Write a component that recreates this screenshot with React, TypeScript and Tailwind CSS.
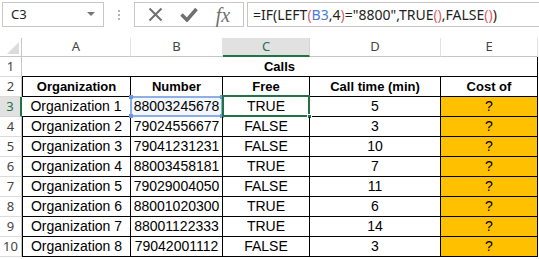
import React from "react";

const rows = [
  ["Organization 1", "88003245678", "TRUE", "5"],
  ["Organization 2", "79024556677", "FALSE", "3"],
  ["Organization 3", "79041231231", "FALSE", "10"],
  ["Organization 4", "88003458181", "TRUE", "7"],
  ["Organization 5", "79029004050", "FALSE", "11"],
  ["Organization 6", "88001020300", "TRUE", "6"],
  ["Organization 7", "88001122333", "TRUE", "14"],
  ["Organization 8", "79042001112", "FALSE", "3"],
];

const cell = "h-[20px] flex items-center justify-center border-r border-b border-black";

function RowHead({ n, active }: { n: number; active?: boolean }) {
  return (
    <div
      className={
        active
          ? "h-[20px] flex items-center justify-center bg-[#e1e1e1] text-[#217346] border-b border-[#d4d4d4] border-r-2 border-r-[#217346]"
          : "h-[20px] flex items-center justify-center text-[#444] border-b border-[#dadada] border-r border-r-[#c6c6c6]"
      }
      style={{ fontFamily: "'Noto Sans', sans-serif" }}
    >
      <span className="text-[13px]">{n}</span>
    </div>
  );
}

function ColHead({ label, active }: { label: string; active?: boolean }) {
  return (
    <div
      className={
        active
          ? "h-[19px] flex items-center justify-center bg-[#e1e1e1] text-[#217346] border-r border-[#d4d4d4] border-b-2 border-b-[#217346]"
          : "h-[19px] flex items-center justify-center text-[#444] border-r border-[#e2e2e2] border-b border-b-[#c6c6c6]"
      }
      style={{ fontFamily: "'Noto Sans', sans-serif" }}
    >
      <span className="text-[13px]">{label}</span>
    </div>
  );
}

export default function App() {
  return (
    <div
      className="w-[539px] h-[259px] overflow-hidden bg-white text-black"
      style={{ fontFamily: "'Liberation Sans', Arial, sans-serif" }}
    >
      {/* Formula bar */}
      <div className="flex items-start pt-[2px] h-[38px]">
        <div
          className="ml-[2px] w-[102px] h-[25px] border border-[#c6c6c6] flex items-center justify-between pl-[8px] pr-[8px] text-[#222]"
          style={{ fontFamily: "'Noto Sans', sans-serif" }}
        >
          <span className="text-[13px]">C3</span>
          <svg width="8" height="5" viewBox="0 0 8 5">
            <path d="M0 0 L8 0 L4 4 Z" fill="#777" />
          </svg>
        </div>
        <div className="w-[30px] h-[25px] flex flex-col items-center justify-center gap-[2px]">
          <div className="w-[2px] h-[2px] bg-[#b5b5b5]" />
          <div className="w-[2px] h-[2px] bg-[#b5b5b5]" />
          <div className="w-[2px] h-[2px] bg-[#b5b5b5]" />
        </div>
        <div className="w-[110px] h-[25px] border border-[#c6c6c6] flex items-center justify-around px-[4px]">
          <svg width="15" height="15" viewBox="0 0 15 15">
            <path d="M1.5 1.5 L13.5 13.5 M13.5 1.5 L1.5 13.5" stroke="#6f6f6f" strokeWidth="2" />
          </svg>
          <svg width="18" height="15" viewBox="0 0 18 15">
            <path d="M1.5 7.5 L7 13 L16.5 2" stroke="#6f6f6f" strokeWidth="3.5" fill="none" />
          </svg>
          <span
            className="text-[20px] italic text-[#6f6f6f] leading-none"
            style={{ fontFamily: "'Liberation Serif', serif" }}
          >
            fx
          </span>
        </div>
        <div
          className="ml-[3px] flex-1 h-[25px] border-l border-t border-b border-[#c6c6c6] flex items-center pl-[5px] text-[14px] text-[#222] whitespace-nowrap"
          style={{ fontFamily: "'Noto Sans', sans-serif" }}
        >
          <span>=IF(LEFT</span>
          <span className="text-[#e05a6a]">(</span>
          <span className="text-[#4a7ad6]">B3</span>
          <span>,4</span>
          <span className="text-[#e05a6a]">)</span>
          <span>="8800",TRUE</span>
          <span className="text-[#e05a6a]">()</span>
          <span>,FALSE</span>
          <span className="text-[#e05a6a]">()</span>
          <span>)</span>
        </div>
      </div>

      {/* Sheet */}
      <div className="grid grid-cols-[22px_109px_92px_87px_131px_97px] text-[14px]">
        {/* Column headers */}
        <div className="h-[19px] border-r border-[#c6c6c6] border-b border-b-[#c6c6c6] flex items-end justify-end pr-[2px] pb-[2px]">
          <svg width="12" height="12" viewBox="0 0 12 12">
            <path d="M12 0 L12 12 L0 12 Z" fill="#dcdcdc" />
          </svg>
        </div>
        <ColHead label="A" />
        <ColHead label="B" />
        <ColHead label="C" active />
        <ColHead label="D" />
        <ColHead label="E" />

        {/* Row 1 */}
        <RowHead n={1} />
        <div className="col-span-5 h-[20px] flex items-center justify-center font-bold text-[13px] border-r border-b border-black">
          Calls
        </div>

        {/* Row 2 */}
        <RowHead n={2} />
        <div className={`${cell} border-l font-bold text-[13px]`}>Organization</div>
        <div className={`${cell} font-bold text-[13px]`}>Number</div>
        <div className={`${cell} font-bold text-[13px]`}>Free</div>
        <div className={`${cell} font-bold text-[13px]`}>Call time (min)</div>
        <div className={`${cell} font-bold text-[13px]`}>Cost of</div>

        {rows.map((r, i) => {
          const n = i + 3;
          const sel = n === 3;
          return (
            <React.Fragment key={n}>
              <RowHead n={n} active={sel} />
              <div className={`${cell} ${sel ? "" : "border-l"}`}>{r[0]}</div>
              <div className={`${cell} relative ${sel ? "bg-[#f3f6fc]" : ""}`}>
                {sel && (
                  <>
                    <div className="absolute -left-[1px] -top-[1px] -right-[1px] -bottom-[1px] border-2 border-[#8eaee6]" />
                    <div className="absolute -left-[2px] -top-[2px] w-[4px] h-[4px] bg-[#6f96dc]" />
                    <div className="absolute -right-[2px] -top-[2px] w-[4px] h-[4px] bg-[#6f96dc]" />
                    <div className="absolute -left-[2px] -bottom-[2px] w-[4px] h-[4px] bg-[#6f96dc]" />
                    <div className="absolute -right-[2px] -bottom-[2px] w-[4px] h-[4px] bg-[#6f96dc]" />
                  </>
                )}
                <span className="relative">{r[1]}</span>
              </div>
              <div className={`${cell} relative`}>
                {sel && (
                  <>
                    <div className="absolute -left-[1px] -top-[2px] -right-[1px] -bottom-[1px] border-2 border-[#217346]" />
                    <div className="absolute -right-[3px] -bottom-[3px] w-[5px] h-[5px] bg-[#217346] border border-white" />
                  </>
                )}
                <span className="relative">{r[2]}</span>
              </div>
              <div className={cell}>{r[3]}</div>
              <div className={`${cell} bg-[#ffc000]`}>?</div>
            </React.Fragment>
          );
        })}
      </div>
    </div>
  );
}
